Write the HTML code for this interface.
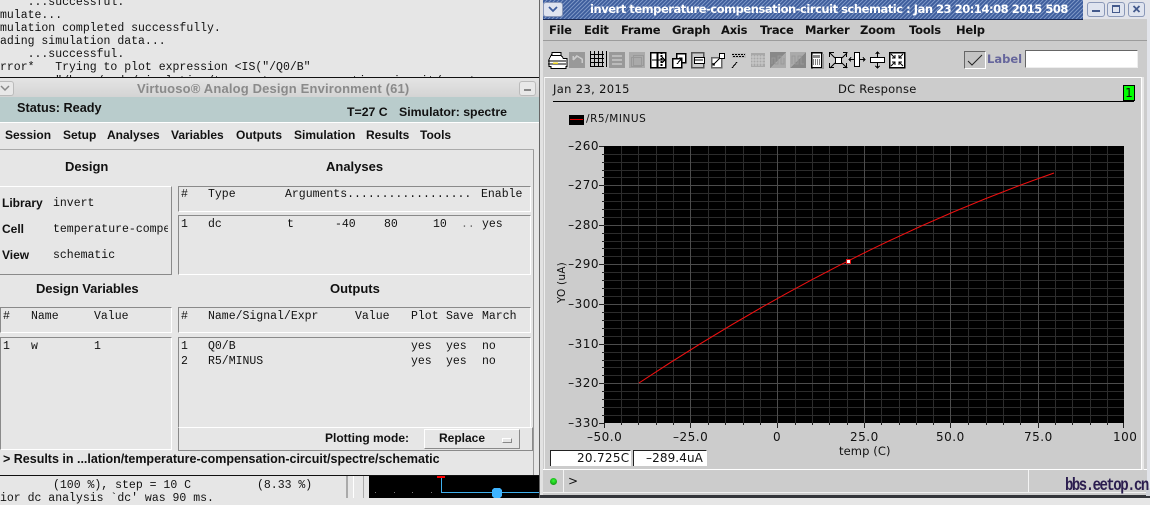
<!DOCTYPE html>
<html><head><meta charset="utf-8">
<style>
html,body{margin:0;padding:0;width:1150px;height:498px;overflow:hidden;background:#e6e6e6}
div,span{position:absolute;white-space:pre}
.m{font:11.5px/13px "Liberation Mono",monospace;color:#111}
.b{font:bold 13px/15px "Liberation Sans",sans-serif;color:#111}
.s{font-size:12px}
.box{border:1px solid;border-color:#8a8a8a #fff #fff #8a8a8a;box-sizing:border-box}
.g{font:bold 11.5px/15px "DejaVu Sans",sans-serif;color:#111;letter-spacing:-.2px}
.t{font:12px/14px "DejaVu Sans",sans-serif;color:#111;letter-spacing:.5px}
.yl{width:50px;text-align:right}
.wb{border:1px solid #8a98b8;background:#dfe4ef;border-radius:3px;box-sizing:border-box}
</style></head><body>

<!-- terminal top -->
<div style="left:0;top:0;width:540px;height:77px;background:#e6e6e6;overflow:hidden">
<div class="m" style="left:0;top:-4px">    ...successful.</div>
<div class="m" style="left:0;top:9px">mulate...</div>
<div class="m" style="left:0;top:22px">mulation completed successfully.</div>
<div class="m" style="left:0;top:35px">ading simulation data...</div>
<div class="m" style="left:0;top:48px">    ...successful.</div>
<div class="m" style="left:0;top:61px">rror*   Trying to plot expression &lt;IS("/Q0/B"</div>
<div class="m" style="left:0;top:75px">        "/home/andy/simulation/temperature-compensation-circuit/spectre</div>
</div>

<!-- bottom terminal -->
<div class="m" style="left:53px;top:479px">(100 %), step = 10 C</div>
<div class="m" style="left:257px;top:479px">(8.33 %)</div>
<div class="m" style="left:0;top:492px">ior dc analysis `dc' was 90 ms.</div>
<div style="left:346px;top:476px;width:2px;height:22px;background:#aaa"></div>
<div style="left:353px;top:476px;width:1px;height:22px;background:#fff"></div>
<div style="left:363px;top:476px;width:1px;height:22px;background:#aaa"></div>
<div style="left:369px;top:476px;width:172px;height:22px;background:#000"></div>
<svg style="position:absolute;left:369px;top:476px" width="172" height="22">
<rect x="68" y="0" width="8" height="2" fill="#f00"/>
<path d="M72.500 2V16.500H172" stroke="#3fb0ee" fill="none"/>
<path d="M125 12h6l2 2v6l-2 2h-6l-2-2v-6z" fill="#3fb4ff"/>
<g fill="#777"><rect x="6" y="16" width="1" height="1"/><rect x="25" y="16" width="1" height="1"/><rect x="43" y="16" width="1" height="1"/><rect x="62" y="16" width="1" height="1"/></g>
</svg>

<!-- ADE window -->
<div style="left:0;top:77px;width:540px;height:399px;background:#e6e6e6;border-top:1px solid #111;border-bottom:1px solid #111;box-sizing:border-box"></div>
<div style="left:0;top:78px;width:540px;height:19px;background:linear-gradient(#e4e4e4,#d4d4d4)"></div>
<div class="wb" style="left:-6px;top:81px;width:20px;height:15px;border-color:#bbb;background:#e8e8e8"></div>
<svg style="position:absolute;left:0;top:85px" width="12" height="8"><path d="M1 1l4 4 4-4" stroke="#888" stroke-width="1.500" fill="none"/></svg>
<div class="wb" style="left:519px;top:81px;width:17px;height:15px;border-color:#bbb;background:#e8e8e8"></div>
<div style="left:524px;top:89px;width:7px;height:2px;background:#888"></div>
<div class="b" style="left:137px;top:81px;color:#8a8a8a;font-size:13px;letter-spacing:.16px">Virtuoso® Analog Design Environment (61)</div>
<div style="left:0;top:97px;width:540px;height:25px;background:#b9cccc"></div>
<div style="left:0;top:122px;width:540px;height:1px;background:#fff"></div>
<div class="b" style="left:17px;top:101px;font-size:12.700px">Status: Ready</div>
<div class="b" style="left:347px;top:105px;font-size:12.300px">T=27 C</div>
<div class="b" style="left:399px;top:105px;font-size:12.300px">Simulator: spectre</div>
<div class="b s" style="left:5px;top:128px">Session</div>
<div class="b s" style="left:63px;top:128px">Setup</div>
<div class="b s" style="left:107px;top:128px">Analyses</div>
<div class="b s" style="left:171px;top:128px">Variables</div>
<div class="b s" style="left:236px;top:128px">Outputs</div>
<div class="b s" style="left:294px;top:128px">Simulation</div>
<div class="b s" style="left:366px;top:128px">Results</div>
<div class="b s" style="left:420px;top:128px">Tools</div>
<div style="left:0;top:149px;width:534px;height:1px;background:#aaa"></div>
<div style="left:533px;top:150px;width:1px;height:325px;background:#999"></div>

<div class="b" style="left:65px;top:159px">Design</div>
<div class="b" style="left:326px;top:159px">Analyses</div>
<div class="b" style="left:36px;top:281px;letter-spacing:-.1px">Design Variables</div>
<div class="b" style="left:330px;top:281px">Outputs</div>

<div class="box" style="left:-2px;top:186px;width:174px;height:89px;border-color:#fff #8a8a8a #8a8a8a #fff"></div>
<div class="box" style="left:178px;top:186px;width:353px;height:26px"></div>
<div class="box" style="left:178px;top:215px;width:353px;height:60px"></div>
<div class="box" style="left:0;top:307px;width:172px;height:26px"></div>
<div class="box" style="left:0;top:337px;width:172px;height:113px"></div>
<div class="box" style="left:178px;top:307px;width:353px;height:26px"></div>
<div class="box" style="left:178px;top:337px;width:353px;height:91px"></div>
<div class="box" style="left:178px;top:427px;width:355px;height:24px;border-top-color:#fff;border-right-color:#8a8a8a;border-bottom-color:#8a8a8a"></div>

<div class="b s" style="left:2px;top:196px">Library</div>
<div class="m" style="left:53px;top:197px">invert</div>
<div class="b s" style="left:2px;top:222px">Cell</div>
<div style="left:53px;top:223px;width:115px;height:14px;overflow:hidden"><div class="m" style="left:0;top:0">temperature-compensation</div></div>
<div class="b s" style="left:2px;top:248px">View</div>
<div class="m" style="left:53px;top:249px">schematic</div>

<div class="m" style="left:181px;top:188px">#</div>
<div class="m" style="left:208px;top:188px">Type</div>
<div class="m" style="left:285px;top:188px">Arguments..................</div>
<div class="m" style="left:481px;top:188px">Enable</div>
<div class="m" style="left:181px;top:218px">1</div>
<div class="m" style="left:208px;top:218px">dc</div>
<div class="m" style="left:287px;top:218px">t</div>
<div class="m" style="left:335px;top:218px">-40</div>
<div class="m" style="left:384px;top:218px">80</div>
<div class="m" style="left:433px;top:218px">10</div>
<div class="m" style="left:461px;top:218px;color:#777">..</div>
<div class="m" style="left:482px;top:218px">yes</div>

<div class="m" style="left:3px;top:310px">#</div>
<div class="m" style="left:31px;top:310px">Name</div>
<div class="m" style="left:94px;top:310px">Value</div>
<div class="m" style="left:3px;top:340px">1</div>
<div class="m" style="left:31px;top:340px">w</div>
<div class="m" style="left:94px;top:340px">1</div>

<div class="m" style="left:181px;top:310px">#</div>
<div class="m" style="left:208px;top:310px">Name/Signal/Expr</div>
<div class="m" style="left:355px;top:310px">Value</div>
<div class="m" style="left:411px;top:310px">Plot</div>
<div class="m" style="left:446px;top:310px">Save</div>
<div class="m" style="left:482px;top:310px">March</div>
<div class="m" style="left:181px;top:340px">1</div>
<div class="m" style="left:208px;top:340px">Q0/B</div>
<div class="m" style="left:411px;top:340px">yes</div>
<div class="m" style="left:446px;top:340px">yes</div>
<div class="m" style="left:482px;top:340px">no</div>
<div class="m" style="left:181px;top:355px">2</div>
<div class="m" style="left:208px;top:355px">R5/MINUS</div>
<div class="m" style="left:411px;top:355px">yes</div>
<div class="m" style="left:446px;top:355px">yes</div>
<div class="m" style="left:482px;top:355px">no</div>

<div class="b s" style="left:325px;top:431px">Plotting mode:</div>
<div style="left:424px;top:429px;width:96px;height:20px;box-sizing:border-box;border:1px solid;border-color:#fff #8a8a8a #8a8a8a #fff;background:#e6e6e6"></div>
<div class="b s" style="left:439px;top:431px">Replace</div>
<div style="left:502px;top:438px;width:10px;height:5px;box-sizing:border-box;border:1px solid;border-color:#fff #888 #888 #fff"></div>
<div class="b" style="left:3px;top:452px;font-size:12.500px">&gt; Results in ...lation/temperature-compensation-circuit/spectre/schematic</div>

<!-- Graph window -->
<div style="left:539px;top:0;width:611px;height:498px;background:#cccccc;border-left:1px solid #666;box-sizing:border-box"></div>
<div style="left:540px;top:0;width:3px;height:495px;background:#e2e2e2"></div>
<div style="left:1147px;top:0;width:3px;height:495px;background:#e2e4ea"></div>
<svg style="position:absolute;left:543px;top:0" width="540" height="20">
<defs><pattern id="h" patternUnits="userSpaceOnUse" width="4" height="4"><rect width="4" height="4" fill="#3c5c9c"/><path d="M-1 1L1-1M0 4L4 0M3 5L5 3" stroke="#7e97c6" stroke-width="1"/></pattern></defs>
<rect width="540" height="19" fill="url(#h)"/><rect y="19" width="540" height="1" fill="#1a2a55"/>
</svg>
<div style="left:1083px;top:0;width:67px;height:19px;background:#e2e4ea"></div>
<div class="wb" style="left:543px;top:2px;width:20px;height:15px"></div>
<svg style="position:absolute;left:547px;top:5px" width="12" height="9"><path d="M2 2l4 4 4-4" stroke="#3c5c9c" stroke-width="1.800" fill="none"/></svg>
<div style="left:590px;top:2px;font:bold 11.500px/15px 'DejaVu Sans',sans-serif;color:#fff;letter-spacing:-.47px">invert temperature-compensation-circuit schematic : Jan 23 20:14:08 2015 508</div>
<div class="wb" style="left:1087px;top:2px;width:18px;height:15px"></div>
<div style="left:1092px;top:10px;width:8px;height:2px;background:#445a8c"></div>
<div class="wb" style="left:1107px;top:2px;width:18px;height:15px"></div>
<div style="left:1112px;top:5px;width:8px;height:8px;box-sizing:border-box;border:1px solid #445a8c;border-top-width:2px"></div>
<div class="wb" style="left:1128px;top:2px;width:17px;height:15px"></div>
<svg style="position:absolute;left:1132px;top:5px" width="10" height="9"><path d="M1.500 1l6 6M7.500 1l-6 6" stroke="#445a8c" stroke-width="1.800"/></svg>

<div class="g" style="left:549px;top:23px">File</div>
<div class="g" style="left:584px;top:23px">Edit</div>
<div class="g" style="left:621px;top:23px">Frame</div>
<div class="g" style="left:672px;top:23px">Graph</div>
<div class="g" style="left:721px;top:23px">Axis</div>
<div class="g" style="left:760px;top:23px">Trace</div>
<div class="g" style="left:805px;top:23px">Marker</div>
<div class="g" style="left:860px;top:23px">Zoom</div>
<div class="g" style="left:909px;top:23px">Tools</div>
<div class="g" style="left:956px;top:23px">Help</div>
<div style="left:543px;top:40px;width:604px;height:1px;background:#9c9c9c"></div>

<!-- toolbar -->
<svg style="position:absolute;left:545px;top:44px" width="365" height="32" shape-rendering="crispEdges">
<g fill="none" stroke="#000">
<!-- printer -->
<path d="M6.500 10.500h9l3 4h3.500v8h-1v2h-15v-2h-2v-7z" fill="#fff"/><path d="M3 17h18M3 20h18"/><path d="M8 19h5" stroke="#e8d020" stroke-width="1.500"/><path d="M7 8.500h9v3h-9z" fill="#fff"/>
<!-- undo disabled -->
<rect x="24" y="8" width="16" height="16" fill="#999" stroke="none"/><path d="M28 16l4-4 5 3v4M28 16v-4" stroke="#ccc" stroke-width="1.500"/>
<!-- grid -->
<path d="M49.500 8v16M53.500 8v16M57.500 8v16M61.500 8v16M45.500 8v16M45 11.500h14M45 15.500h14M45 19.500h14M45 23.500h14" transform="translate(0,-1)"/>
<!-- lines disabled -->
<rect x="64" y="8" width="16" height="16" fill="#999" stroke="none"/><path d="M67 12h10M67 16h10M67 20h10" stroke="#bbb" stroke-width="2"/>
<!-- copies disabled -->
<rect x="84" y="8" width="16" height="16" fill="#aaa" stroke="none"/><path d="M88.500 11.500h10v10h-10zM86.500 13.500h10v9h-10z" stroke="#999"/>
<!-- split -->
<path d="M105.500 8.500h15v15h-15z" fill="#fff" stroke-width="1.500"/><path d="M112.500 8.500v15" stroke-width="2"/><path d="M116.500 8v16" stroke-dasharray="2 1" stroke-width="2"/><path d="M107 16h13M117 13l3 3-3 3"/>
<!-- overlap -->
<path d="M131.500 9.500h9v9h-9z" fill="#fff" stroke-width="1.500"/><path d="M127.500 14.500h9v9h-9z" fill="#fff" stroke-width="1.500"/><path d="M132 20l5-6M134 14h3v3"/>
<!-- frame label -->
<path d="M146.500 8.500h12v15h-12z" fill="#ccc" stroke="#555" stroke-width="1.500"/><path d="M149.500 13.500h10v6h-10zM149 16h9" fill="#fff"/>
<!-- corner -->
<path d="M166.500 13.500h10v10h-10z" fill="#fff" stroke="#666" stroke-width="1.500"/><path d="M174.500 9.500h5v5h-5z" fill="#fff"/><path d="M168 21l6-6M170 21h-2v-2"/>
<!-- dotted flag -->
<path d="M187 9h14v5h-14z" fill="#bbb" stroke="none"/><path d="M187 10.500h2m1 0h2m1 0h2m1 0h2m1 0h1M188 12.500h2m1 0h2m1 0h2m1 0h2"/><path d="M187 24l5-6"/>
<!-- table disabled -->
<path d="M206 9h14v14h-14z" fill="#a8a8a8" stroke="none"/><path d="M208 11v11M211 11v11M214 11v11M217 11v11M206 13h14M206 16h14M206 19h14" stroke="#ccc"/>
<!-- waves disabled -->
<rect x="225" y="8" width="16" height="16" fill="#aaa" stroke="none"/><path d="M241 8L225 24V8z" fill="#888" stroke="none"/><path d="M227 20v-6h3v6h3v-8h3v8h3v-6" stroke="#999"/>
<rect x="245" y="8" width="16" height="16" fill="#aaa" stroke="none"/><path d="M261 24H245l16-16z" fill="#888" stroke="none"/><path d="M247 20v-8h3v8h3v-8h3v8h3" stroke="#999"/>
<!-- calculator -->
<path d="M266.500 8.500h10v15h-10z" fill="#fff" stroke-width="1.500"/><path d="M277 10h2v15h-11v-1h9z" fill="#999" stroke="none"/><path d="M268 11h7v3h-7z" fill="#888" stroke="none"/><path d="M268 16h1m1 0h1m1 0h1m1 0h1M268 18h1m1 0h1m1 0h1m1 0h1M268 20h1m1 0h1m1 0h1m1 0h1"/>
<!-- zoom fit -->
<path d="M290.500 13.500h6v6h-6z" fill="#fff"/><path d="M285 9l5 5M302 9l-5 5M285 24l5-5M302 24l-5-5" shape-rendering="auto"/><path d="M285 8.500h4M284.500 8v5M298 8.500h4.500M301.500 8v5M285 23.500h4M284.500 19v5M298 23.500h4.500M301.500 19v5"/>
<!-- h-expand -->
<path d="M309.500 8.500h5v14h-5z" fill="#fff"/><path d="M304 15.500h5M315 15.500h5M306 13.500l-2 2 2 2M318 13.500l2 2-2 2"/>
<!-- v-expand -->
<path d="M325.500 13.500h14v5h-14z" fill="#fff"/><path d="M332.500 8v5M332.500 19v5M330.500 10l2-2 2 2M330.500 22l2 2 2-2"/>
<!-- shrink -->
<path d="M344.500 8.500h15v15h-15z" fill="#fff" stroke-width="1.500"/><path d="M346 10l4 4M358 10l-4 4M346 22l4-4M358 22l-4-4M350 11v3h-3M354 11v3h3M350 21v-3h-3M354 21v-3h3" shape-rendering="auto"/>
</g></svg>

<div style="left:964px;top:51px;width:22px;height:18px;box-sizing:border-box;border:1px solid;border-color:#666 #fff #fff #666;background:#c4c4c4"></div>
<svg style="position:absolute;left:967px;top:54px" width="17" height="13"><path d="M1 7l4 4L15 1" stroke="#222" fill="none"/></svg>
<div style="left:987px;top:52px;font:bold 11.500px/15px 'DejaVu Sans',sans-serif;color:#66669c">Label</div>
<div style="left:1025px;top:50px;width:113px;height:18px;box-sizing:border-box;background:#fff;border:1px solid #666;border-right-color:#eee;border-bottom-color:#eee"></div>

<!-- graph frame -->
<div style="left:544px;top:77px;width:598px;height:393px;box-sizing:border-box;border:1px solid #fff;border-left-color:#eee"></div>
<div class="t" style="left:553px;top:82px;font-size:11.500px;letter-spacing:.35px">Jan 23, 2015</div>
<div class="t" style="left:838px;top:82px;font-size:11.500px;letter-spacing:.25px">DC Response</div>
<div style="left:553px;top:101px;width:581px;height:1px;background:#000"></div>
<div style="left:1123px;top:85px;width:12px;height:16px;box-sizing:border-box;border:1px solid #000;background:#00ff00;font:12px/15px 'DejaVu Sans',sans-serif;text-align:center;color:#111">1</div>
<div style="left:569px;top:115px;width:15px;height:10px;background:#000"></div>
<div style="left:570px;top:119px;width:13px;height:1px;background:#e00000"></div>
<div style="left:586px;top:112px;font:10.500px/14px 'DejaVu Sans',sans-serif;color:#111;letter-spacing:.55px">/R5/MINUS</div>

<!-- plot -->
<svg style="position:absolute;left:595px;top:140px" width="540" height="295">
<rect x="9" y="6" width="520" height="277" fill="#000"/>
<g stroke="#2c2c2c" shape-rendering="crispEdges" fill="none">
<path d="M26.500 6v277M43.500 6v277M61.500 6v277M78.500 6v277M113.500 6v277M130.500 6v277M148.500 6v277M165.500 6v277M200.500 6v277M217.500 6v277M234.500 6v277M252.500 6v277M286.500 6v277M304.500 6v277M321.500 6v277M338.500 6v277M373.500 6v277M391.500 6v277M408.500 6v277M425.500 6v277M460.500 6v277M477.500 6v277M495.500 6v277M512.500 6v277"/>
<path d="M9 14.500h520M9 22.500h520M9 30.500h520M9 37.500h520M9 53.500h520M9 61.500h520M9 69.500h520M9 77.500h520M9 93.500h520M9 101.500h520M9 108.500h520M9 116.500h520M9 132.500h520M9 140.500h520M9 148.500h520M9 156.500h520M9 172.500h520M9 180.500h520M9 188.500h520M9 196.500h520M9 212.500h520M9 220.500h520M9 227.500h520M9 235.500h520M9 251.500h520M9 259.500h520M9 267.500h520M9 275.500h520"/>
</g>
<g stroke="#4c4c4c" shape-rendering="crispEdges" fill="none">
<path d="M95.500 6v277M182.500 6v277M269.500 6v277M355.500 6v277M443.500 6v277"/>
<path d="M9 45.500h520M9 85.500h520M9 124.500h520M9 164.500h520M9 204.500h520M9 243.500h520"/>
</g>
<g shape-rendering="crispEdges" fill="none" stroke="#222">
<path d="M4 6.500h5M4 45.500h5M4 85.500h5M4 124.500h5M4 164.500h5M4 204.500h5M4 243.500h5M4 283.500h5"/>
<path d="M7 14.500h2M7 22.500h2M7 30.500h2M7 37.500h2M7 53.500h2M7 61.500h2M7 69.500h2M7 77.500h2M7 93.500h2M7 101.500h2M7 108.500h2M7 116.500h2M7 132.500h2M7 140.500h2M7 148.500h2M7 156.500h2M7 172.500h2M7 180.500h2M7 188.500h2M7 196.500h2M7 212.500h2M7 220.500h2M7 227.500h2M7 235.500h2M7 251.500h2M7 259.500h2M7 267.500h2M7 275.500h2"/>
<path d="M9.500 283v5M95.500 283v5M182.500 283v5M269.500 283v5M355.500 283v5M443.500 283v5M528.500 283v5"/>
<path d="M26.500 283v2M43.500 283v2M61.500 283v2M78.500 283v2M113.500 283v2M130.500 283v2M148.500 283v2M165.500 283v2M200.500 283v2M217.500 283v2M234.500 283v2M252.500 283v2M286.500 283v2M304.500 283v2M321.500 283v2M338.500 283v2M373.500 283v2M391.500 283v2M408.500 283v2M425.500 283v2M460.500 283v2M477.500 283v2M495.500 283v2M512.500 283v2"/>
</g>
<path d="M44 243Q251.500 105.500 459 33" fill="none" stroke="#f01010" stroke-width="1"/>
<rect x="251.500" y="119.500" width="4" height="4" fill="#fff" stroke="#e01010" stroke-width="1" shape-rendering="crispEdges"/>
</svg>

<div class="t yl" style="left:549px;top:139px">–260</div>
<div class="t yl" style="left:549px;top:178px">–270</div>
<div class="t yl" style="left:549px;top:218px">–280</div>
<div class="t yl" style="left:549px;top:257px">–290</div>
<div class="t yl" style="left:549px;top:297px">–300</div>
<div class="t yl" style="left:549px;top:337px">–310</div>
<div class="t yl" style="left:549px;top:376px">–320</div>
<div class="t yl" style="left:549px;top:416px">–330</div>

<div class="t" style="left:587px;top:430px">–50.0</div>
<div class="t" style="left:673px;top:430px">–25.0</div>
<div class="t" style="left:773px;top:430px">0</div>
<div class="t" style="left:850px;top:430px">25.0</div>
<div class="t" style="left:936px;top:430px">50.0</div>
<div class="t" style="left:1024px;top:430px">75.0</div>
<div class="t" style="left:1113px;top:430px">100</div>
<div class="t" style="left:839px;top:444px;font-size:11.500px;letter-spacing:.1px">temp (C)</div>
<svg style="position:absolute;left:553px;top:255px" width="16" height="60"><text transform="translate(12,48) rotate(-90)" font-family="DejaVu Sans" font-size="10.500" fill="#111" letter-spacing=".2">YO (uA)</text></svg>

<div style="left:550px;top:450px;width:81px;height:16px;box-sizing:border-box;background:#fff;border:1px solid #222;border-bottom:0;border-right-color:#fff"></div>
<div class="t" style="left:577px;top:451px;letter-spacing:.3px">20.725C</div>
<div style="left:633px;top:450px;width:74px;height:16px;box-sizing:border-box;background:#fff;border:1px solid #222;border-bottom:0;border-right-color:#fff"></div>
<div class="t" style="left:646px;top:451px;letter-spacing:.1px">–289.4uA</div>

<!-- status bar -->
<div style="left:543px;top:469px;width:604px;height:1px;background:#fff"></div>
<div style="left:563px;top:470px;width:1px;height:23px;background:#f4f4f4"></div>
<div style="left:1028px;top:470px;width:1px;height:23px;background:#f4f4f4"></div>
<div style="left:1142px;top:77px;width:2px;height:393px;background:#e8e8e8"></div>
<div style="left:543px;top:492px;width:604px;height:1px;background:#f0f0f0"></div>
<div style="left:550px;top:478px;width:7px;height:7px;border-radius:50%;background:radial-gradient(circle at 50% 40%,#33ff33,#0a7a0a)"></div>
<div style="left:568px;top:474px;font:12px/14px 'DejaVu Sans',sans-serif;color:#111">&gt;</div>
<div style="left:540px;top:495px;width:610px;height:3px;background:#33353a"></div>
<div style="left:1146px;top:488px;width:4px;height:8px;background:#cfd2d8"></div>
<div style="left:1065px;top:478px;font:bold 14px/16px 'Liberation Mono',monospace;color:#2b1d4f;letter-spacing:-1.500px;transform-origin:left center;transform:scaleY(1.250)">bbs.eetop.cn</div>

</body></html>
